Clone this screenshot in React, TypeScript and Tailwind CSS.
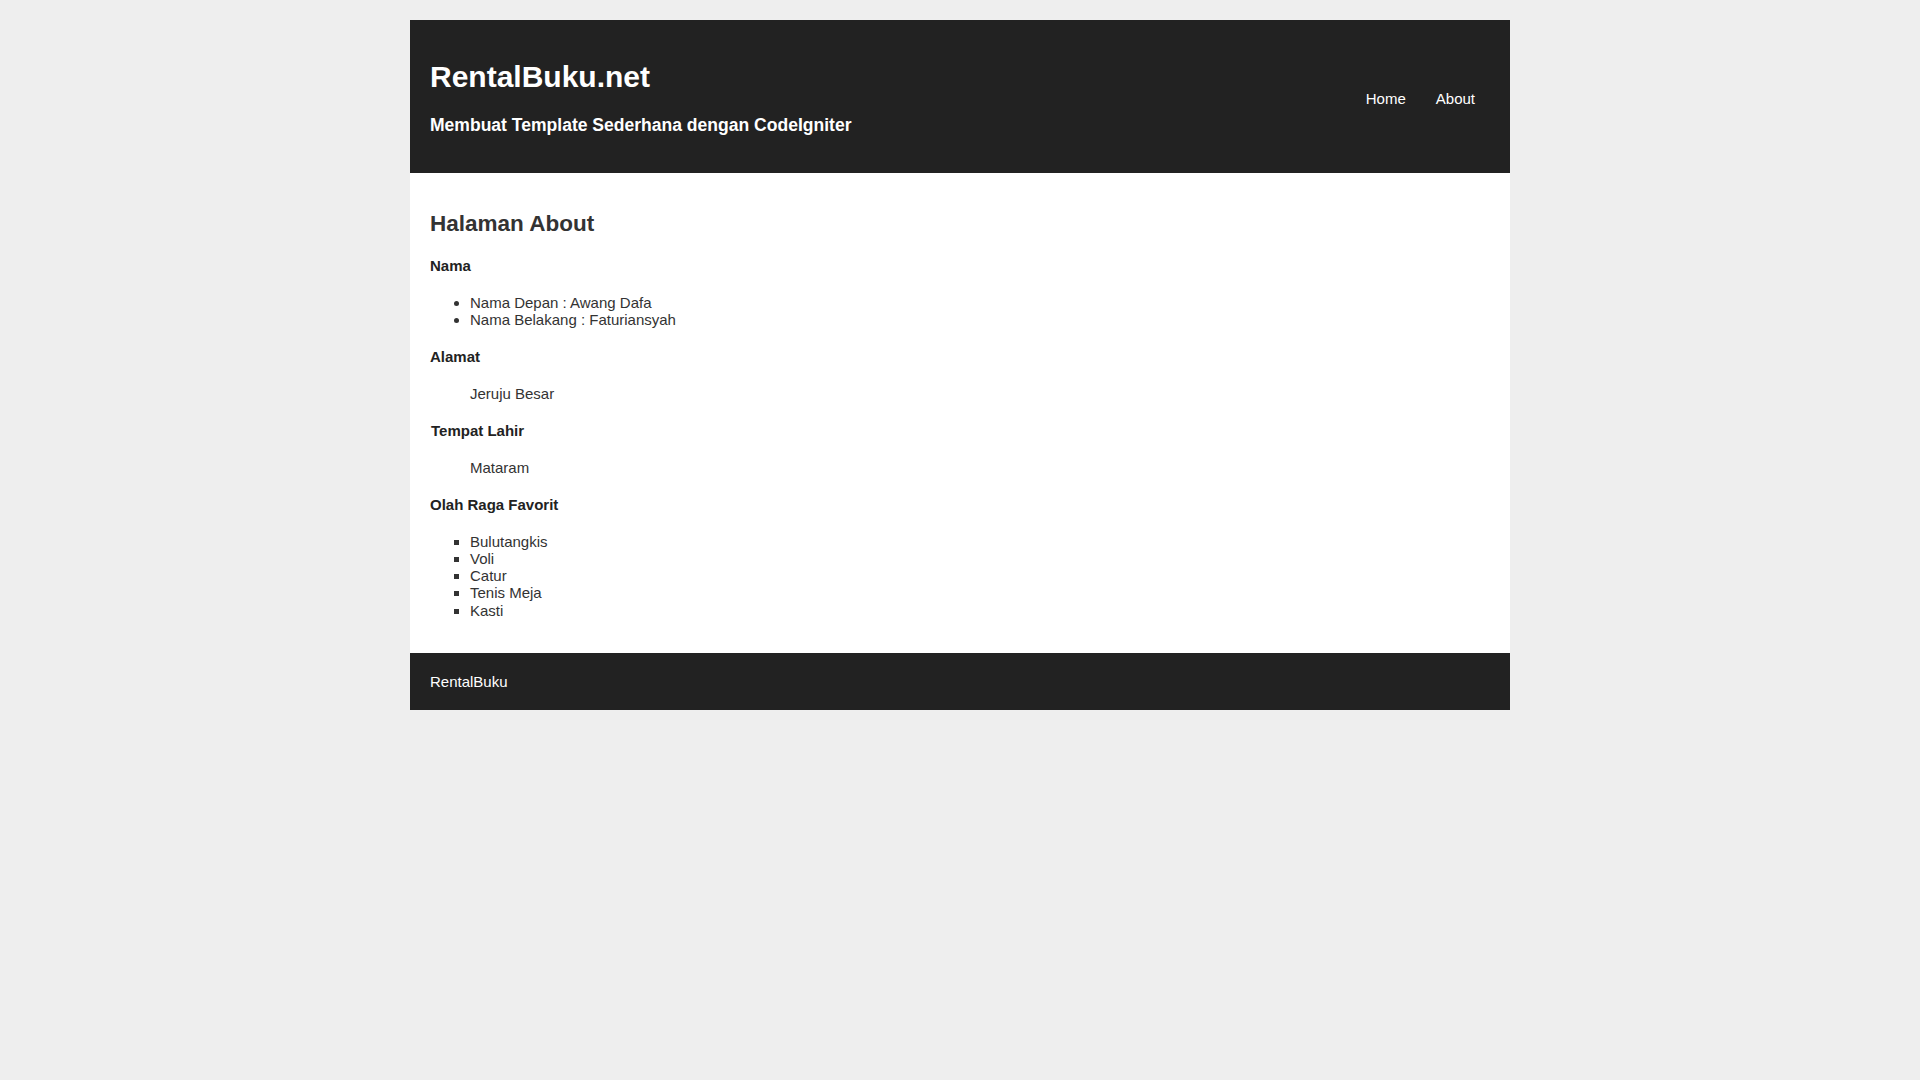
const namaList = ["Nama Depan : Awang Dafa", "Nama Belakang : Faturiansyah"];
const olahRaga = ["Bulutangkis", "Voli", "Catur", "Tenis Meja", "Kasti"];

export default function App() {
  return (
    <div className="min-h-screen w-full bg-[#eeeeee] pt-[20px] font-['Liberation_Sans',Arial,sans-serif] text-[15px] leading-[1.15]">
      <div className="mx-auto w-[1100px]">
        {/* header */}
        <div className="flex items-center justify-between bg-[#222222] p-[20px] text-white">
          <div>
            <h1 className="mt-[20px] mb-[20px] text-[30px] font-bold leading-[1.15]">RentalBuku.net</h1>
            <h3 className="mt-[18px] mb-[18px] text-[17.55px] font-bold leading-[1.15]">
              Membuat Template Sederhana dengan CodeIgniter
            </h3>
          </div>
          <nav className="flex pt-[4px]">
            <a href="#" className="px-[15px] text-white">Home</a>
            <a href="#" className="px-[15px] text-white">About</a>
          </nav>
        </div>

        {/* content */}
        <div className="bg-white px-[20px] pt-[20px] pb-[19px] text-[#333333]">
          <h2 className="mt-[18px] mb-[20px] text-[22.5px] font-bold leading-[1.15] text-[#333333]">Halaman About</h2>

          <h4 className="my-[20px] font-bold text-[#222222]">Nama</h4>
          <ul className="my-[15px] list-disc pl-[40px]">
            {namaList.map((n) => (
              <li key={n}>{n}</li>
            ))}
          </ul>

          <h4 className="mt-[20px] mb-[19px] font-bold text-[#222222]">Alamat</h4>
          <p className="my-[15px] pl-[40px]">Jeruju Besar</p>

          <h4 className="mt-[20px] mb-[20px] pl-[1px] font-bold text-[#222222]">Tempat Lahir</h4>
          <p className="my-[15px] pl-[40px]">Mataram</p>

          <h4 className="mt-[20px] mb-[19px] font-bold text-[#222222]">Olah Raga Favorit</h4>
          <ul className="mt-[15px] mb-[15px] list-[square] pl-[40px]">
            {olahRaga.map((o) => (
              <li key={o}>{o}</li>
            ))}
          </ul>
        </div>

        {/* footer */}
        <div className="bg-[#222222] p-[20px] text-white">RentalBuku</div>
      </div>
    </div>
  );
}
